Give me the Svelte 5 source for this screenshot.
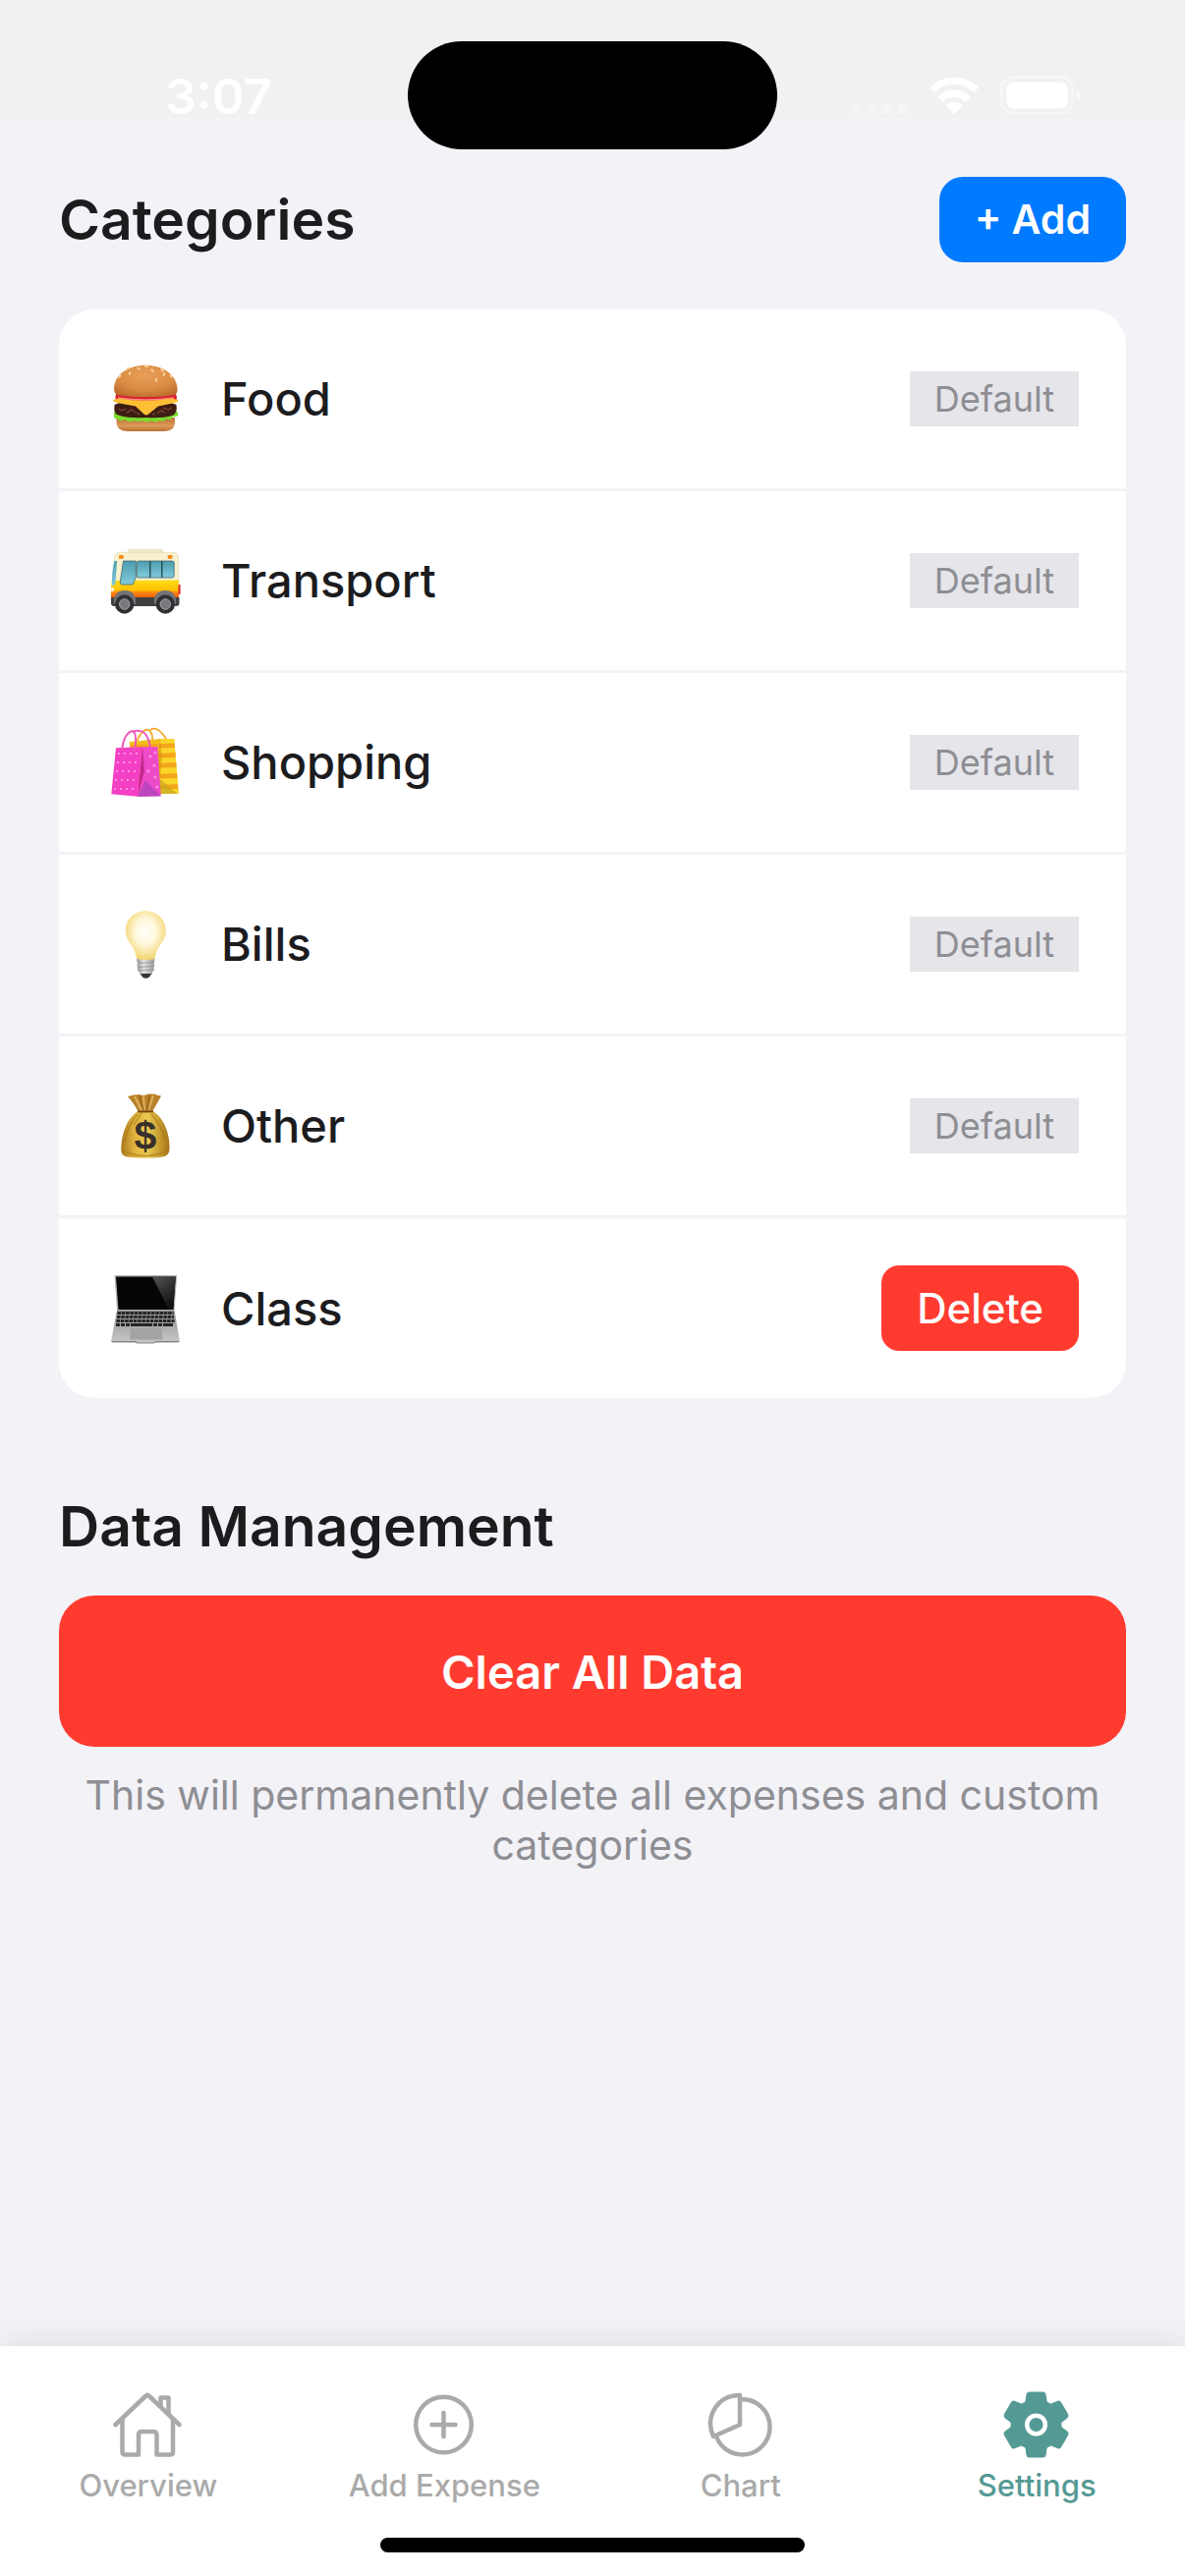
<script>
  const categories = [
    { name: 'Food', icon: 'burger', custom: false },
    { name: 'Transport', icon: 'bus', custom: false },
    { name: 'Shopping', icon: 'bags', custom: false },
    { name: 'Bills', icon: 'bulb', custom: false },
    { name: 'Other', icon: 'money', custom: false },
    { name: 'Class', icon: 'laptop', custom: true }
  ];

  const tabs = [
    { name: 'Overview', icon: 'home' },
    { name: 'Add Expense', icon: 'plus' },
    { name: 'Chart', icon: 'pie' },
    { name: 'Settings', icon: 'gear' }
  ];

  const active = 'Settings';
  const teeth = [0, 60, 120, 180, 240, 300];
  const seeds = [
    [10, 13, 35], [20, 10, 10], [18, 5, 50], [29, 5, -60], [37, 3, 90], [43, 7, -45],
    [47, 17, 15], [55, 11, 30], [53, 7, -50], [62, 13, -30]
  ];
  const dots = [0, 1, 2, 3, 4].flatMap((r) => [0, 1, 2, 3].map((c) => [9 + c * 6 - r, 27 + r * 9]));
  const keyRows = [39, 43, 47, 51];
</script>

<div class="screen">
  <header class="status">
    <span class="time">3:07</span>
    <span class="island"></span>
    <span class="signals">
      <svg class="cell" viewBox="0 0 58 40" aria-hidden="true">
        <g fill="#fff" fill-opacity="0.35">
          <circle cx="5" cy="34" r="5" /><circle cx="21" cy="34" r="5" />
          <circle cx="37" cy="34" r="5" /><circle cx="53" cy="34" r="5" />
        </g>
      </svg>
      <svg class="wifi" viewBox="0 0 50 40" aria-hidden="true">
        <g fill="#fff" transform="translate(0 1)">
          <path d="M.7 10.5C14.5-2.5 35.5-2.5 49.3 10.5Q50 11.3 49.3 12L46 15.3Q45 16 44.2 15.3C33 5.5 17 5.5 5.8 15.3Q5 16 4 15.3L.7 12Q0 11.3.7 10.5Z" />
          <path d="M9 19.6C18 11 32 11 41 19.6Q41.7 20.4 41 21.2L37.4 24.9Q36.4 25.8 35.4 24.9C29.5 19.6 20.5 19.6 14.6 24.9Q13.6 25.8 12.6 24.9L9 21.2Q8.3 20.4 9 19.6Z" />
          <path d="M17.6 29C21.5 24.8 28.5 24.8 32.4 29Q33 29.900 32.4 30.7L26 37.3Q25 38 24 37.3L17.6 30.7Q17 29.9 17.6 29Z" />
        </g>
      </svg>
      <svg class="battery" viewBox="0 0 82 40" aria-hidden="true">
        <rect x="1.5" y="1.5" width="72" height="37" rx="12" fill="none" stroke="#fff" stroke-opacity="0.4" stroke-width="3" />
        <rect x="6" y="6.5" width="63" height="27" rx="8" fill="#fff" />
        <path d="M78 14Q82 16 82 20Q82 24 78 26Z" fill="#fff" fill-opacity="0.5" />
      </svg>
    </span>
  </header>

  <main>
    <section>
      <div class="head">
        <h2>Categories</h2>
        <button class="add" type="button">+ Add</button>
      </div>
      <ul class="card">
        {#each categories as c}
          <li>
            <span class="emoji">
              <svg viewBox="0 0 72 72" aria-hidden="true">
                {#if c.icon === 'burger'}
                  <defs>
                    <radialGradient id="bun" cx="0.5" cy="0.3" r="0.8">
                      <stop offset="0" stop-color="#e9a059" /><stop offset="0.6" stop-color="#d98a42" /><stop offset="1" stop-color="#b76528" />
                    </radialGradient>
                    <linearGradient id="bunBase" x1="0" y1="0" x2="0" y2="1">
                      <stop offset="0" stop-color="#b8733a" /><stop offset="0.6" stop-color="#dd9a58" /><stop offset="1" stop-color="#b86f35" />
                    </linearGradient>
                  </defs>
                  <path d="M6.5 55H66V61Q65 69 54 69H18Q8 69 6.5 61Z" fill="url(#bunBase)" />
                  <path d="M4 50Q3 57 7 56Q10 60 15 57Q20 61 24 58Q29 60 33 58Q38 61 42 58Q46 61 50 58Q55 60 58 56Q62 59 64 54Q70 55 69 50L66 47H6Z" fill="#7bdd2e" />
                  <path d="M4.5 42Q3 53 10 53Q20 56 36 55Q54 56 63 53Q69 51 67.5 42L60 39H12Z" fill="#3d1d13" />
                  <path d="M9 46l3 2 4-2M17 50l5-3 4 3M48 51l4-3 4 2M54 45l5 2 4-2M27 50l3 2M43 52l3-1" stroke="#74402c" stroke-width="1.5" fill="none" />
                  <path d="M6 31Q36 34 67 31Q70 38 64 40H9Q4 38 6 31Z" fill="#d8232f" />
                  <path d="M8 35Q36 39 65 35" stroke="#ff8585" stroke-width="1.5" fill="none" />
                  <path d="M3 37L9 35.5Q36 40 62 35.5L69 37Q70 39 66 40L49 43.5L38.5 52Q36.500 53 34.5 51.5L26 43.5L7 40Q3 39 3 37Z" fill="#ffbf35" />
                  <path d="M4 25C5 10 20 1.7 36 1.7C54 1.7 67 11 68.5 25Q69 31 65 32Q52 34 36 34Q20 34 8 32Q4 31 4 25Z" fill="url(#bun)" />
                  {#each seeds as [x, y, a]}
                    <ellipse cx={x} cy={y} rx="1" ry="2.1" transform="rotate({a} {x} {y})" fill="#f8d5a2" />
                  {/each}
                {:else if c.icon === 'bus'}
                  <defs>
                    <linearGradient id="busSide" x1="0" y1="0" x2="0" y2="1">
                      <stop offset="0" stop-color="#ffdc18" /><stop offset="0.55" stop-color="#ffc000" /><stop offset="0.66" stop-color="#ff8a12" /><stop offset="1" stop-color="#f05a00" />
                    </linearGradient>
                    <linearGradient id="glass" x1="0" y1="0" x2="0" y2="1">
                      <stop offset="0" stop-color="#4d9db0" /><stop offset="1" stop-color="#82cbdc" />
                    </linearGradient>
                  </defs>
                  <path d="M18 8L19.5 4.5H53L54.5 8Z" fill="#f2eac6" stroke="#e2d9b0" stroke-width="0.7" />
                  <path d="M4.7 12Q5 7.3 10 7.3H64Q69 7.3 69.5 12L70 38H2Z" fill="#f8f0cf" stroke="#e2d9b0" stroke-width="0.7" />
                  <path d="M2 36L70 35.5V54H1V42Z" fill="url(#busSide)" />
                  <path d="M1 53H70.5V59Q70.5 62 67 62H4Q.7 62 1 58Z" fill="#3f4042" />
                  <path d="M4.5 16H7L5.5 39Q5 41 2 41Q1.5 27 4.5 16Z" fill="url(#glass)" />
                  <path d="M13.5 16H26.3V33L23 40H12Q10 40 10.3 37Z" fill="url(#glass)" stroke="#3b5961" stroke-width="0.7" />
                  <rect x="27.2" y="16" width="38" height="17" rx="2" fill="url(#glass)" stroke="#3b5961" stroke-width="0.7" />
                  <path d="M40.8 16V33M52.8 16V33" stroke="#23434c" stroke-width="1.3" />
                  <rect x="9" y="10" width="4.7" height="3.7" rx="0.5" fill="#f58a16" />
                  <rect x="58.7" y="10" width="4.7" height="3.7" rx="0.5" fill="#f58a16" />
                  <rect x="69.6" y="40" width="2" height="10" rx="0.7" fill="#df272c" />
                  <rect x="1" y="43" width="3" height="4" rx="1" fill="#fff0d6" />
                  <path d="M4 60Q3 46 15 46Q27 46 26 60ZM45 60Q44 46 56.3 46Q68 46 67 60Z" fill="#737477" />
                  <g fill="#303133"><circle cx="14.7" cy="60" r="9.7" /><circle cx="56.3" cy="60" r="9.7" /></g>
                  <g fill="#77797c" stroke="#a5a6a8" stroke-width="1"><circle cx="14.7" cy="60" r="5.2" /><circle cx="56.3" cy="60" r="5.2" /></g>
                {:else if c.icon === 'bags'}
                  <path d="M27 15Q33 1 39 3Q44 6 43 14M41 3Q48-2 57 12" fill="none" stroke="#f5a82c" stroke-width="1.8" />
                  <path d="M19.5 15L51.3 12L65.3 12.3L69.7 67.5L51.3 68L30 66Z" fill="#f2c01c" />
                  <path d="M51.3 12L65.3 12.3L69.7 67.5L51.3 68Z" fill="#f9d62a" />
                  <path d="M20 18L66 16.5V21L20 22.5ZM48 27L66.5 26V31L48 31.5ZM48 37L67.3 36V41L48 41.5ZM50 48L68.2 47V52L50 52.5ZM51 59L69 58V63L51 63.5Z" fill="#f4a51c" />
                  <path d="M51 12L48 35L51 67V52L53 30Z" fill="#d7920e" opacity="0.5" />
                  <path d="M51 53L69 68L51 68Z" fill="#c7a51e" opacity="0.7" />
                  <path d="M33 20.3H48.3L51.7 70.3L28 70.7Z" fill="#ee4bc8" />
                  <path d="M6 21.3L33 20.3L28 70.7L1.3 68.3Z" fill="#f440c4" />
                  <path d="M33 20.3L35 45L28 70.7Z" fill="#c42a8f" />
                  <path d="M36 54L51.7 70.3L28 70.7Z" fill="#bd45bf" />
                  {#each dots as [x, y]}
                    <circle cx={x} cy={y} r="1.1" fill="#ffa6e8" />
                  {/each}
                  <g fill="#ff8fe0">
                    <circle cx="41" cy="30" r="1.5" /><circle cx="46" cy="26" r="1.5" /><circle cx="45" cy="39" r="1.5" />
                    <circle cx="39" cy="45" r="1.5" /><circle cx="46" cy="51" r="1.5" /><circle cx="48" cy="61" r="1.5" />
                  </g>
                  <path d="M12 24Q14 6 23 4Q28 6 25 25M24 4.5Q38 0 41 21" fill="none" stroke="#ef57bd" stroke-width="2" />
                {:else if c.icon === 'bulb'}
                  <defs>
                    <radialGradient id="glow" cx="0.5" cy="0.43" r="0.56">
                      <stop offset="0" stop-color="#fffffa" /><stop offset="0.45" stop-color="#fff9df" /><stop offset="1" stop-color="#f3d570" />
                    </radialGradient>
                    <linearGradient id="cap" x1="0" x2="1">
                      <stop offset="0" stop-color="#9a9a9a" /><stop offset="0.4" stop-color="#e2e2df" /><stop offset="1" stop-color="#9b9b9b" />
                    </linearGradient>
                  </defs>
                  <path d="M30 65H43L40 69.5Q36.3 72 33 69.5Z" fill="#363636" />
                  <path d="M27.3 50H45.3V54L44.5 55.5L45.3 57.5L44.5 59.5L45 62L42 66H31L27.6 62L28.2 59.5L27.3 57.5L28.2 55.5L27.3 54Z" fill="url(#cap)" />
                  <path d="M28 55.5L45 54.5M28 59.5L45 58.5M28.5 63L44 62" stroke="#888" stroke-width="0.7" />
                  <path d="M36.3 2.2C48 2.2 56.8 11 56.8 22.5C56.8 34 46.5 38 45.5 51Q36.3 53 27.1 51C26 38 15.8 34 15.8 22.5C15.8 11 24.5 2.2 36.3 2.2Z" fill="url(#glow)" />
                {:else if c.icon === 'money'}
                  <defs>
                    <linearGradient id="sack" x1="0" x2="1">
                      <stop offset="0" stop-color="#a9771b" /><stop offset="0.28" stop-color="#dfb540" /><stop offset="0.55" stop-color="#e9c94e" /><stop offset="1" stop-color="#a77518" />
                    </linearGradient>
                  </defs>
                  <path d="M18 6Q25 4 30 4Q35 6 39 3.5L45 3.5Q48 5 52 5.5Q47 15 43 21.5H28.5Q25 14 18 6Z" fill="#ba812a" />
                  <path d="M25 6L32 20M34 6L35 20M44 5L39 20" stroke="#ddb05c" stroke-width="2" />
                  <path d="M30 5L34 20M40 5L38 20" stroke="#855414" stroke-width="1" />
                  <path d="M28.5 21H43.5C54 27 61 43 60.500 60Q60 66 54 67.5Q36 70 17 67.5Q11.5 66 11.3 61C11 44 18 27 28.5 21Z" fill="url(#sack)" />
                  <path d="M28 24Q18 35 15 53M32 23L24 35M42 24Q53 36 56 52M13 61Q36 72 59 61" fill="none" stroke="#a87517" stroke-width="1.5" opacity="0.6" />
                  <path d="M28 21.5H44" stroke="#754810" stroke-width="1.8" />
                  <text x="36" y="60" text-anchor="middle" class="dollar">$</text>
                {:else}
                  <defs>
                    <linearGradient id="deck" x1="0" y1="0" x2="0" y2="1">
                      <stop offset="0" stop-color="#8f8f8f" /><stop offset="1" stop-color="#c8c8c8" />
                    </linearGradient>
                    <linearGradient id="shine" x1="0" y1="0" x2="0.5" y2="1">
                      <stop offset="0" stop-color="#555" /><stop offset="1" stop-color="#111" />
                    </linearGradient>
                  </defs>
                  <path d="M4.5 2H68.2L65.5 38H7Z" fill="#b5b5b5" />
                  <path d="M6 3.5H66.8L64.3 37H8.5Z" fill="#050505" />
                  <path d="M43 3.5H66.8L64.3 37H60Z" fill="url(#shine)" />
                  <path d="M7 37.7H65.5L70.7 68Q71 71 68 71H4Q1 71 1.3 68Z" fill="url(#deck)" />
                  {#each keyRows as y, i}
                    <path d="M{7.5 - i * 0.5} {y + 1.5}H{64.5 + i * 0.5}" stroke="#252525" stroke-width="3" stroke-dasharray={i === 3 ? '4 1 4 1 4 1 22 1 4 1 4 1 10' : '3.6 0.7'} />
                  {/each}
                  <path d="M21 55.5H52.5L53.5 67.5H20Z" fill="#a4a4a4" />
                  <path d="M1.5 69.5H26L27.5 71H44.5L46 69.5H70.5" fill="none" stroke="#858585" stroke-width="1.2" />
                {/if}
              </svg>
            </span>
            <span class="name">{c.name}</span>
            {#if c.custom}
              <button class="delete" type="button">Delete</button>
            {:else}
              <span class="badge">Default</span>
            {/if}
          </li>
        {/each}
      </ul>
    </section>

    <section class="data">
      <h2>Data Management</h2>
      <button class="clear" type="button">Clear All Data</button>
      <p>This will permanently delete all expenses and custom categories</p>
    </section>
  </main>

  <nav>
    <div class="tabs">
      {#each tabs as t}
        <a href="#{t.icon}" class:active={t.name === active} aria-current={t.name === active ? 'page' : undefined}>
          <svg viewBox="0 0 72 72" fill="none" stroke="currentColor" stroke-width="4.5" stroke-linecap="round" stroke-linejoin="round" aria-hidden="true">
            {#if t.icon === 'home'}
              <path d="M2.5 36L33 7Q35 5 37 7L67.5 36" />
              <path d="M9.5 31V63.5Q9.5 66.5 12.5 66.5H26V46.5Q26 43 29.5 43H41Q44.5 43 44.5 46.5V66.5H58Q61 66.5 61 63.5V31" />
              <path d="M48.5 17V8.5H56.5V25" />
            {:else if t.icon === 'plus'}
              <circle cx="35.5" cy="36" r="28.3" />
              <path d="M23.5 36H47.5M35.5 24V48" />
            {:else if t.icon === 'pie'}
              <path d="M35 6V36L8 48C-1 28 12 6 35 6Z" />
              <path d="M36 10.2C52 9.5 65.5 22 65.5 38.2C65.5 54 53 66.5 37.5 66.5C26 66.5 15.5 59.5 11.5 49" />
            {:else}
              <g fill="currentColor" stroke="none">
                <circle cx="35.5" cy="36" r="26" />
                {#each teeth as a}
                  <path transform="rotate({a} 35.5 36)" d="M28.5 2.4H42.5Q45 2.4 45.5 5L46.5 12Q47 15 51 15L53 19L35.5 36L18 19L20 15Q24 15 24.5 12L25.5 5Q26 2.4 28.5 2.4Z" />
                {/each}
              </g>
              <circle cx="35.5" cy="36" r="9.3" stroke="#fff" />
            {/if}
          </svg>
          <span>{t.name}</span>
        </a>
      {/each}
    </div>
    <div class="indicator"></div>
  </nav>
</div>

<style>
  :global(body) {
    margin: 0;
    background: #f2f2f7;
  }
  .screen {
    min-height: 100vh;
    display: flex;
    flex-direction: column;
    background: #f2f2f7;
    color: #1c1c1e;
    font-family: Inter, 'Liberation Sans', sans-serif;
  }
  .status {
    position: relative;
    box-sizing: border-box;
    height: 120px;
    padding: 76px 106px 0 168px;
    display: flex;
    justify-content: space-between;
    background: #f1f1f1;
    color: #fff;
  }
  .time {
    font-size: 50px;
    line-height: 44px;
    font-weight: 600;
  }
  .island {
    position: absolute;
    top: 42px;
    left: 50%;
    width: 376px;
    height: 110px;
    margin-left: -188px;
    border-radius: 55px;
    background: #000;
  }
  .signals {
    display: flex;
    align-items: flex-start;
    height: 40px;
    padding-top: 1px;
  }
  .signals svg {
    height: 40px;
  }
  .cell {
    width: 58px;
    margin-right: 22px;
  }
  .wifi {
    width: 50px;
    margin-right: 22px;
  }
  .battery {
    width: 82px;
  }
  main {
    padding: 60px;
    flex: 1;
  }
  h2 {
    margin: 0;
    font-size: 57px;
    line-height: 69px;
    font-weight: 600;
  }
  button {
    border: 0;
    color: #fff;
    font-family: inherit;
    cursor: pointer;
  }
  .head {
    display: flex;
    justify-content: space-between;
    align-items: center;
    margin-bottom: 48px;
  }
  .add,
  .delete {
    height: 87px;
    padding: 0 36px;
    line-height: 51px;
  }
  .add {
    border-radius: 24px;
    background: #007aff;
    font-size: 41px;
    font-weight: 600;
  }
  .delete {
    border-radius: 18px;
    background: #ff3b30;
    font-size: 42px;
    font-weight: 500;
  }
  .card {
    margin: 0;
    padding: 0;
    list-style: none;
    background: #fff;
    border-radius: 36px;
  }
  li {
    display: flex;
    align-items: center;
    padding: 48px;
    border-bottom: 3px solid #f2f2f7;
  }
  li:last-child {
    border-bottom: 0;
  }
  .emoji {
    width: 80px;
    height: 86px;
    margin-right: 37px;
    display: flex;
    align-items: center;
    justify-content: center;
  }
  .emoji svg {
    width: 72px;
    height: 72px;
  }
  .dollar {
    font-family: 'Liberation Sans', sans-serif;
    font-size: 41px;
    font-weight: 700;
    fill: #382f2b;
  }
  .name {
    flex: 1;
    font-size: 47px;
    line-height: 60px;
    font-weight: 500;
  }
  .badge {
    padding: 4px 25px;
    background: #e5e5ea;
    color: #8e8e93;
    font-size: 36px;
    line-height: 48px;
  }
  .data {
    margin-top: 96px;
  }
  .clear {
    display: block;
    width: 100%;
    height: 154px;
    margin-top: 36px;
    border-radius: 36px;
    background: #ff3b30;
    font-size: 47px;
    font-weight: 600;
  }
  p {
    margin: 24px 0 0;
    color: #8e8e93;
    font-size: 41px;
    line-height: 51px;
    text-align: center;
  }
  nav {
    padding: 44px 0 24px;
    background: #fff;
    box-shadow: 0 -6px 30px rgba(0, 0, 0, 0.08);
  }
  .tabs {
    display: grid;
    grid-template-columns: repeat(4, 1fr);
  }
  a {
    display: flex;
    flex-direction: column;
    align-items: center;
    gap: 8px;
    color: #aaa;
    font-size: 31px;
    line-height: 36px;
    font-weight: 500;
    text-decoration: none;
  }
  a svg {
    width: 72px;
    height: 72px;
  }
  a.active {
    color: #549994;
  }
  .indicator {
    width: 432px;
    height: 15px;
    margin: 35px auto 0;
    border-radius: 8px;
    background: #000;
  }
</style>
